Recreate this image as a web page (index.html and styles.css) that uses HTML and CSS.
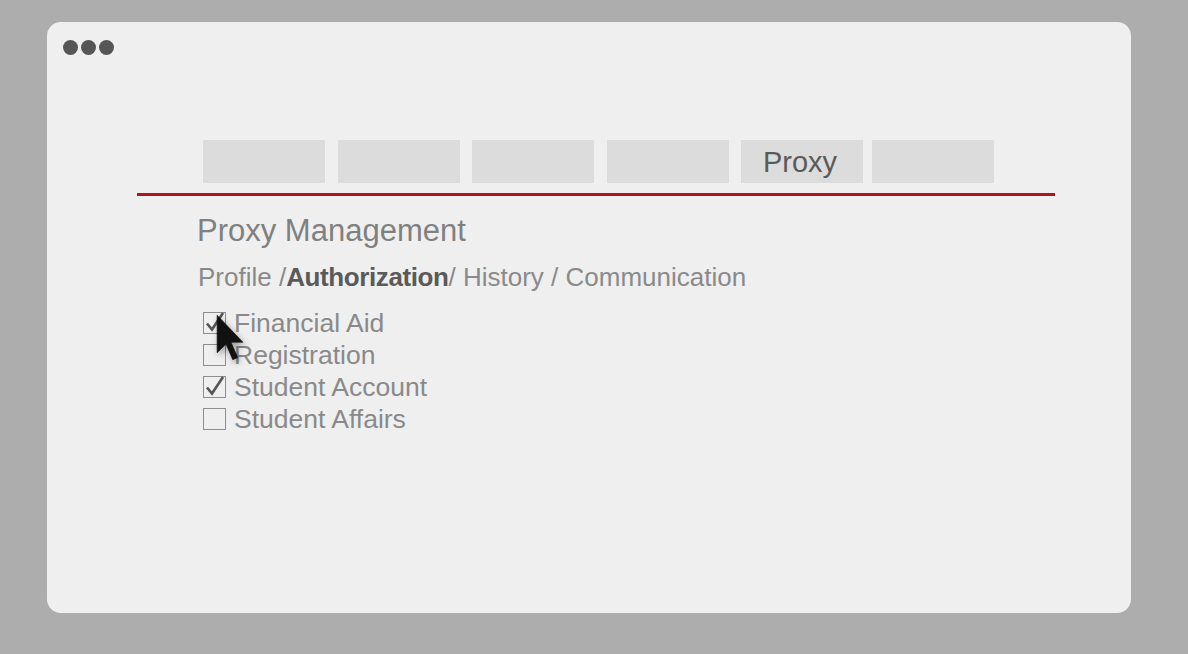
FILE: index.html
```html
<!DOCTYPE html>
<html>
<head>
<meta charset="utf-8">
<link rel="stylesheet" href="styles.css">
</head>
<body>
<div class="window">
  <div class="dots"><span></span><span></span><span></span></div>
  <nav class="tabs">
    <div class="tab"></div>
    <div class="tab"></div>
    <div class="tab"></div>
    <div class="tab"></div>
    <div class="tab">Proxy</div>
    <div class="tab"></div>
  </nav>
  <div class="rule"></div>
  <main class="content">
    <h1 class="title">Proxy Management</h1>
    <div class="subnav">Profile /<span class="active">Authorization</span>/ History / Communication</div>
    <ul class="checks">
      <li class="row"><span class="box"><svg viewBox="0 0 23 22"><path d="M4 11.5 L9 17.5 L20 1"/></svg></span>Financial Aid</li>
      <li class="row"><span class="box"></span>Registration</li>
      <li class="row"><span class="box"><svg viewBox="0 0 23 22"><path d="M4 11.5 L9 17.5 L20 1"/></svg></span>Student Account</li>
      <li class="row"><span class="box"></span>Student Affairs</li>
    </ul>
  </main>
  <svg class="cursor" viewBox="0 0 12 20" width="28" height="51"><polygon points="0.5,0.5 0.5,16.5 4.3,12.8 7.2,19.5 9.3,18.6 6.4,12 11.5,12"/></svg>
</div>
</body>
</html>
```

FILE: styles.css
```css
html, body {
  margin: 0;
  padding: 0;
}
body {
  background: #adadad;
  width: 1188px;
  height: 654px;
  overflow: hidden;
  font-family: "Liberation Sans", Arial, sans-serif;
  padding: 22px 0 0 47px;
  box-sizing: border-box;
}
.window {
  position: relative;
  width: 1084px;
  height: 591px;
  background: #efefef;
  border-radius: 14px;
  box-sizing: border-box;
  padding: 18px 0 0 0;
}
.dots {
  display: flex;
  gap: 3px;
  padding-left: 16px;
  height: 15px;
}
.dots span {
  width: 15px;
  height: 15px;
  border-radius: 50%;
  background: #565656;
}
.tabs {
  display: flex;
  gap: 12.5px;
  margin: 85px 0 0 156px;
  height: 43px;
}
.tab {
  width: 122px;
  height: 43px;
  background: #dcdcdc;
  color: #5a5a5a;
  font-size: 29px;
  line-height: 44px;
  text-align: center;
  padding-right: 4px;
  box-sizing: border-box;
}
.tab:last-child {
  margin-left: -4px;
}
.rule {
  margin: 10px 0 0 90px;
  width: 918px;
  height: 3px;
  background: #b3141c;
}
.content {
  padding-left: 150px;
}
.title {
  margin: 17px 0 0 0;
  font-weight: normal;
  font-size: 31px;
  line-height: 36px;
  color: #808080;
}
.subnav {
  margin-top: 13px;
  margin-left: 1px;
  font-size: 26px;
  line-height: 30px;
  color: #8a8a8a;
}
.subnav .active {
  color: #5a5a5a;
  font-weight: bold;
  letter-spacing: -0.4px;
}
.checks {
  list-style: none;
  margin: 15px 0 0 6px;
  padding: 0;
}
.row {
  display: flex;
  align-items: center;
  gap: 8px;
  height: 32px;
  font-size: 26.5px;
  color: #8a8a8a;
}
.box {
  width: 23px;
  height: 22px;
  box-sizing: border-box;
  border: 1.5px solid #8e8e8e;
  position: relative;
}
.box svg {
  position: absolute;
  left: -1.5px;
  top: -1.5px;
  width: 23px;
  height: 22px;
  overflow: visible;
}
.box svg path {
  fill: none;
  stroke: #555;
  stroke-width: 2.6;
  stroke-linejoin: miter;
}
.cursor {
  position: absolute;
  left: 169px;
  top: 290px;
  filter: drop-shadow(2px 3px 3px rgba(0,0,0,0.35));
}
.cursor polygon {
  fill: #111;
  stroke: #111;
  stroke-width: 0.3;
}
```
